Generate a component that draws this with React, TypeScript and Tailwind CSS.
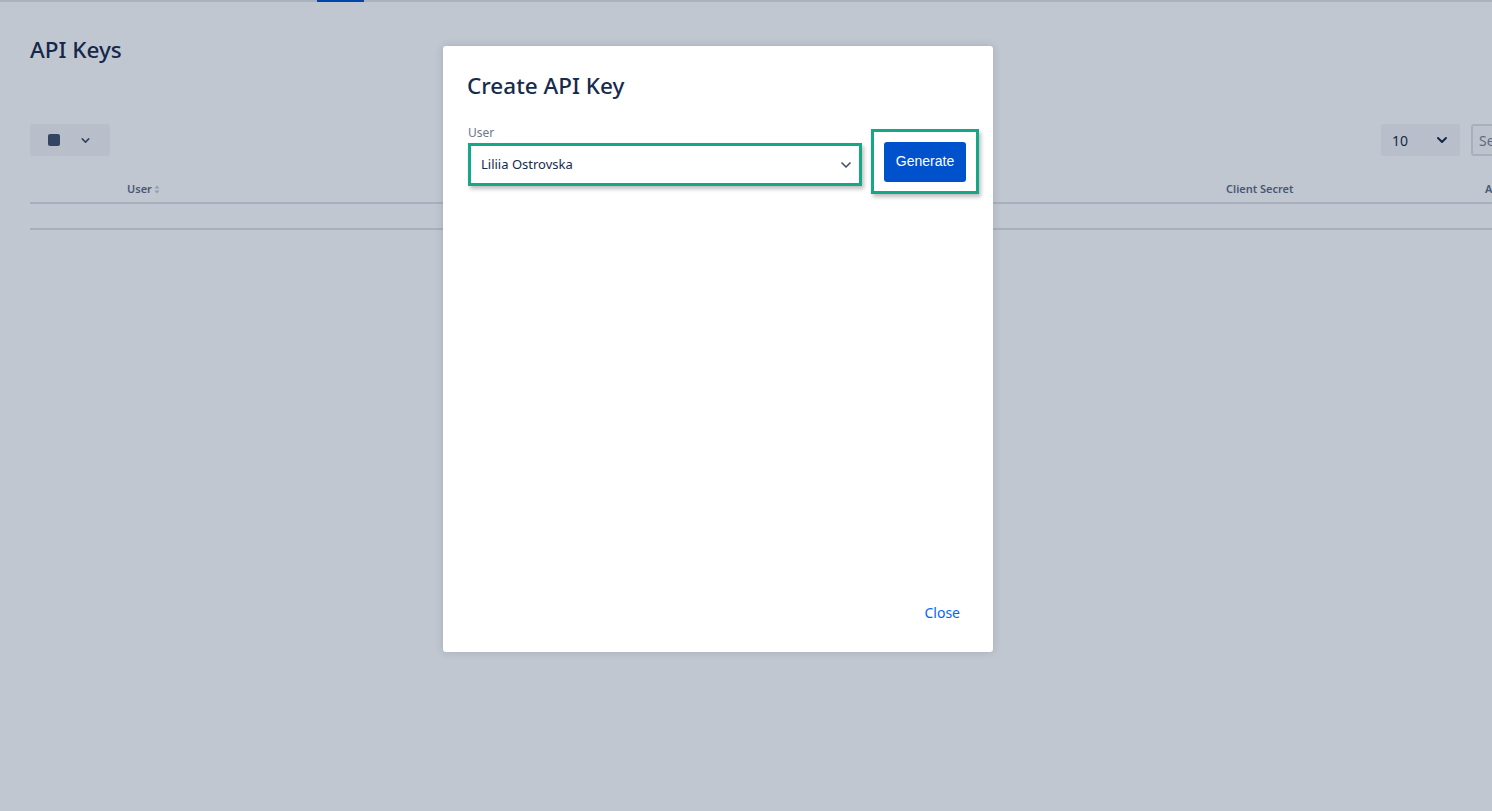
import { ChevronDown } from "lucide-react";

const font = { fontFamily: '"Noto Sans", "Open Sans", Arial, sans-serif' };

function SortIcon() {
  return (
    <svg width="6" height="9" viewBox="0 0 6 9" className="ml-0.5 inline-block">
      <path d="M3 0.5 L5.5 3.5 H0.5 Z" fill="#c1c7d0" />
      <path d="M3 8.5 L5.5 5.5 H0.5 Z" fill="#c1c7d0" />
    </svg>
  );
}

function Page() {
  return (
    <div className="min-h-[811px] w-[1600px] bg-white">
      <div className="relative h-[2px] bg-[#e1e3e8]">
        <div className="absolute left-[317px] top-0 h-[2px] w-[47px] bg-[#0052cc]" />
      </div>
      <div className="px-[30px]">
        <h1 className="mt-[34px] text-[22.5px] font-medium leading-[28px] text-[#172b4d]">API Keys</h1>

        <div className="mt-[60px] flex items-center justify-between">
          <button className="flex h-[32px] w-[80px] items-center gap-[19px] rounded-[3px] bg-[#f4f5f7] pl-[18px]">
            <span className="h-[12px] w-[12px] rounded-[2px] bg-[#42526e]" />
            <ChevronDown className="h-[13px] w-[13px] text-[#42526e]" strokeWidth={3} />
          </button>
          <div className="mr-[-61px] flex items-center gap-[11px]">
            <div className="flex h-[32px] w-[79px] items-center justify-between rounded-[3px] bg-[#f4f5f7] pl-[11px] pr-[10px] text-[14px] text-[#172b4d]">
              <span>10</span>
              <ChevronDown className="h-[16px] w-[16px] text-[#172b4d]" strokeWidth={3} />
            </div>
            <div className="flex h-[32px] w-[160px] items-center rounded-[3px] border-2 border-[#dfe1e6] bg-[#fafbfc] px-[6px] text-[14px] text-[#7a869a]">
              Search
            </div>
          </div>
        </div>

        <div className="mt-[24px] w-[1540px]">
          <div className="flex h-[24px] items-start pt-[1px] border-b-2 border-[#dfe1e6] text-[11px] font-semibold text-[#5e6c84]">
            <div className="w-[97px]" />
            <div className="flex w-[1099px] items-center">User<SortIcon /></div>
            <div className="w-[259px]">Client Secret</div>
            <div>Actions</div>
          </div>
          <div className="h-[26px] border-b-2 border-[#dfe1e6]" />
        </div>
      </div>
    </div>
  );
}

function Modal() {
  return (
    <div className="absolute left-[443px] top-[46px] flex h-[606px] w-[550px] flex-col rounded-[3px] bg-white shadow-[0_0_8px_rgba(9,30,66,0.15)]">
      <div className="px-[24px] pt-[26px]">
        <h2 className="text-[22.5px] font-medium leading-[28px] text-[#172b4d]">Create API Key</h2>
      </div>
      <div className="flex items-start pl-[25px] pt-[25px]">
        <div className="flex shrink-0 flex-col">
          <label className="text-[12px] leading-[16px] text-[#6b778c]">User</label>
          <div className="mt-[2px] flex h-[43px] w-[394px] items-center justify-between border-[3px] border-[#14a888] bg-white pl-[10px] pr-[5px] shadow-[2px_3px_4px_rgba(0,0,0,0.25)]">
            <span className="text-[13px] text-[#172b4d]">Liliia Ostrovska</span>
            <ChevronDown className="h-[16px] w-[16px] text-[#42526e]" strokeWidth={2.5} />
          </div>
        </div>
        <div className="ml-[9px] mt-[4px] flex h-[65px] w-[108px] shrink-0 items-center justify-center border-[3px] border-[#14a888] bg-white shadow-[2px_3px_4px_rgba(0,0,0,0.25)]">
          <button
            className="h-[40px] w-[82px] rounded-[3px] bg-[#0052cc] text-[14px] text-white"
            style={{ fontFamily: '"Liberation Sans", Arial, sans-serif' }}
          >
            Generate
          </button>
        </div>
      </div>
      <div className="mt-auto flex justify-end px-[33px] pb-[29px]">
        <span className="text-[14px] text-[#0065ff]">Close</span>
      </div>
    </div>
  );
}

export default function App() {
  return (
    <div className="relative h-[811px] w-[1492px] overflow-hidden" style={font}>
      <Page />
      <div className="absolute inset-0 bg-[rgba(9,30,66,0.25)]" />
      <Modal />
    </div>
  );
}
